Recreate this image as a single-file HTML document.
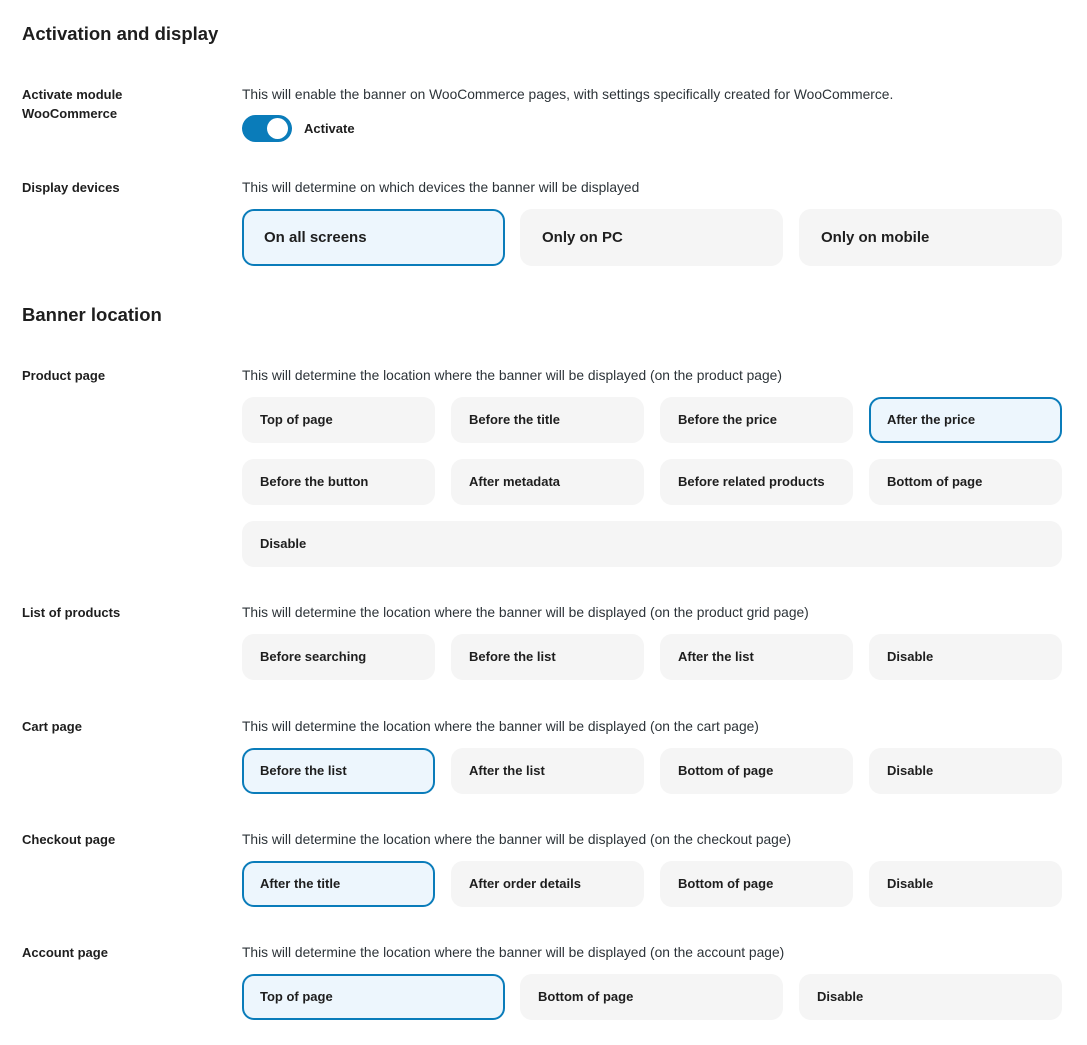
<!DOCTYPE html>
<html><head><meta charset="utf-8"><style>
*{margin:0;padding:0;box-sizing:border-box}
body{width:1087px;height:1045px;background:#fff;font-family:"Liberation Sans",sans-serif;color:#1e1e1e;position:relative;overflow:hidden}
.a{position:absolute;white-space:nowrap}
h2{position:absolute;left:22px;font-size:18.5px;font-weight:600;color:#1e1e1e;line-height:24px}
.l{position:absolute;left:22px;font-size:13px;font-weight:bold;line-height:19px}
.d{position:absolute;left:242px;font-size:13.8px;color:#2c3338;line-height:19px;white-space:nowrap}
.b{position:absolute;height:46px;width:193px;background:#f5f5f5;border-radius:12px;font-size:13px;font-weight:bold;line-height:46px;padding-left:18px;color:#1e1e1e}
.b.s{background:#edf6fd;border:2px solid #0a7cba;line-height:42px;padding-left:16px}
.w{width:263px}
.big{height:57px;line-height:57px;font-size:15px;font-weight:600;padding-left:22px}
.big.s{line-height:53px;padding-left:20px}
</style></head><body>
<h2 style="top:22px">Activation and display</h2>
<div class="l" style="top:85px">Activate module<br>WooCommerce</div>
<div class="d" style="top:85px">This will enable the banner on WooCommerce pages, with settings specifically created for WooCommerce.</div>
<div class="a" style="left:242px;top:115px;width:50px;height:27px;border-radius:14px;background:#0a7cba"></div>
<div class="a" style="left:267px;top:118px;width:21px;height:21px;border-radius:50%;background:#fff"></div>
<div class="a" style="left:304px;top:119px;font-size:13px;font-weight:bold;line-height:19px">Activate</div>

<div class="l" style="top:178px">Display devices</div>
<div class="d" style="top:178px">This will determine on which devices the banner will be displayed</div>
<div class="b w big s" style="left:242px;top:209px">On all screens</div>
<div class="b w big" style="left:520px;top:209px">Only on PC</div>
<div class="b w big" style="left:799px;top:209px">Only on mobile</div>

<h2 style="top:303px">Banner location</h2>
<div class="l" style="top:366px">Product page</div>
<div class="d" style="top:366px">This will determine the location where the banner will be displayed (on the product page)</div>
<div class="b" style="left:242px;top:397px">Top of page</div>
<div class="b" style="left:451px;top:397px">Before the title</div>
<div class="b" style="left:660px;top:397px">Before the price</div>
<div class="b s" style="left:869px;top:397px">After the price</div>
<div class="b" style="left:242px;top:459px">Before the button</div>
<div class="b" style="left:451px;top:459px">After metadata</div>
<div class="b" style="left:660px;top:459px">Before related products</div>
<div class="b" style="left:869px;top:459px">Bottom of page</div>
<div class="b" style="left:242px;top:521px;width:820px">Disable</div>

<div class="l" style="top:603px">List of products</div>
<div class="d" style="top:603px">This will determine the location where the banner will be displayed (on the product grid page)</div>
<div class="b" style="left:242px;top:634px">Before searching</div>
<div class="b" style="left:451px;top:634px">Before the list</div>
<div class="b" style="left:660px;top:634px">After the list</div>
<div class="b" style="left:869px;top:634px">Disable</div>

<div class="l" style="top:717px">Cart page</div>
<div class="d" style="top:717px">This will determine the location where the banner will be displayed (on the cart page)</div>
<div class="b s" style="left:242px;top:748px">Before the list</div>
<div class="b" style="left:451px;top:748px">After the list</div>
<div class="b" style="left:660px;top:748px">Bottom of page</div>
<div class="b" style="left:869px;top:748px">Disable</div>

<div class="l" style="top:830px">Checkout page</div>
<div class="d" style="top:830px">This will determine the location where the banner will be displayed (on the checkout page)</div>
<div class="b s" style="left:242px;top:861px">After the title</div>
<div class="b" style="left:451px;top:861px">After order details</div>
<div class="b" style="left:660px;top:861px">Bottom of page</div>
<div class="b" style="left:869px;top:861px">Disable</div>

<div class="l" style="top:943px">Account page</div>
<div class="d" style="top:943px">This will determine the location where the banner will be displayed (on the account page)</div>
<div class="b w s" style="left:242px;top:974px">Top of page</div>
<div class="b w" style="left:520px;top:974px">Bottom of page</div>
<div class="b w" style="left:799px;top:974px">Disable</div>
</body></html>
